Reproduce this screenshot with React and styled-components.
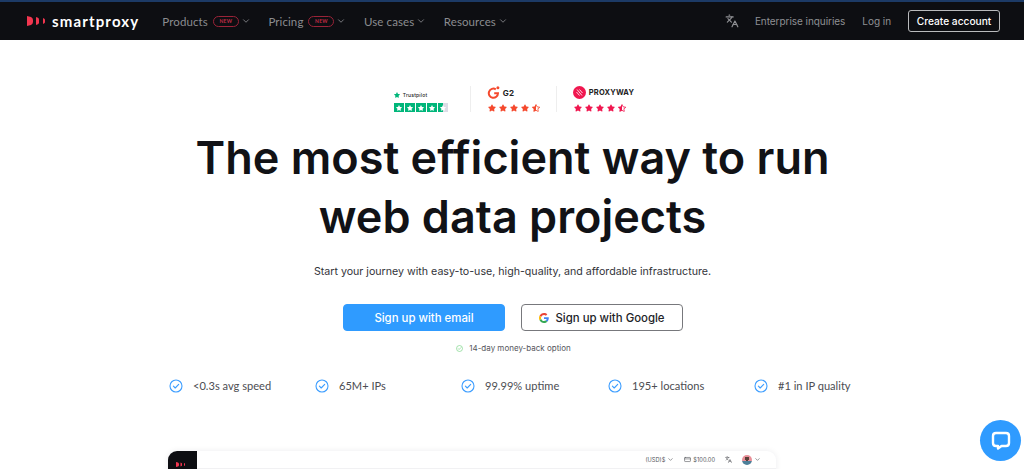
import React from "react";
import styled, { createGlobalStyle } from "styled-components";
import { FaStar, FaStarHalfAlt } from "react-icons/fa";
import { LuChevronDown, LuLanguages, LuCreditCard } from "react-icons/lu";

const GlobalStyle = createGlobalStyle`
  html, body { margin: 0; padding: 0; background: #fff; }
  body { font-family: "Inter", "Liberation Sans", sans-serif; overflow: hidden; }
  * { box-sizing: border-box; }
`;

const Page = styled.div`
  position: relative;
  width: 1024px;
  height: 469px;
  overflow: hidden;
  background: #fff;
`;

const Nav = styled.header`
  height: 40px;
  background: #0d0e12;
  border-top: 2px solid #1c3a66;
  display: flex;
  align-items: center;
  justify-content: space-between;
  padding: 0 24px 0 27px;
`;

const NavLeft = styled.div`
  display: flex;
  align-items: center;
`;

const Brand = styled.div`
  display: flex;
  align-items: center;
  gap: 7px;
  margin-right: 23px;
`;

const BrandName = styled.span`
  font-family: "Lato", sans-serif;
  font-size: 15px;
  font-weight: 700;
  letter-spacing: 1.15px;
  color: #fff;
`;

const NavItem = styled.div`
  display: flex;
  align-items: center;
  font-family: "Lato", sans-serif;
  font-size: 11.5px;
  color: #8b8c90;
  margin-right: 17.5px;
  letter-spacing: 0.1px;
  svg { margin-left: 2px; }
`;

const NewBadge = styled.span`
  width: 26px;
  height: 11px;
  margin-left: 5px;
  border: 1px solid #9a2338;
  border-radius: 6px;
  color: #c22c46;
  font-size: 5px;
  font-weight: 700;
  letter-spacing: 0.3px;
  display: flex;
  align-items: center;
  justify-content: center;
`;

const NavRight = styled.div`
  display: flex;
  align-items: center;
  color: #8f9094;
  font-size: 10px;
  letter-spacing: -0.05px;
  svg { margin-right: 16px; }
`;

const NavLink = styled.span`
  margin-right: 17px;
`;

const OutlineButton = styled.button`
  width: 92px;
  height: 22px;
  padding: 0;
  background: transparent;
  border: 1px solid #b9babc;
  border-radius: 3px;
  color: #fff;
  font: 500 10.2px "Inter", sans-serif;
`;

const Hero = styled.main`
  display: flex;
  flex-direction: column;
  align-items: center;
`;

const Ratings = styled.div`
  display: flex;
  align-items: stretch;
  margin: 46px 0 0 -2px;
  height: 26px;
`;

const Rating = styled.div`
  display: flex;
  flex-direction: column;
  justify-content: ${(p) => (p.$compact ? "flex-end" : "space-between")};
  gap: ${(p) => (p.$compact ? "5px" : "0")};
  align-items: flex-start;
  padding: 0 ${(p) => p.$pad}px;
  border-left: ${(p) => (p.$divider ? "1px solid #eeeeee" : "none")};
`;

const RatingName = styled.div`
  display: flex;
  align-items: center;
  gap: 3px;
  font-size: ${(p) => p.$size}px;
  font-weight: ${(p) => p.$weight};
  color: #222;
  letter-spacing: 0.2px;
`;

const Stars = styled.div`
  display: flex;
  gap: 3px;
  margin-left: 1px;
  color: ${(p) => p.$color};
  font-size: 8px;
`;

const TrustBar = styled.div`
  display: flex;
  gap: 1px;
  height: 9px;
`;

const TrustCell = styled.span`
  width: 10px;
  display: flex;
  align-items: center;
  justify-content: center;
  color: #fff;
  font-size: 6px;
  background: ${(p) => (p.$half ? "linear-gradient(90deg, #00b67a 50%, #dcdce6 50%)" : "#00b67a")};
`;

const Title = styled.h1`
  margin: 16px 0 0 1px;
  text-align: center;
  font-size: 45px;
  line-height: 59px;
  font-weight: 600;
  color: #111216;
`;

const Subtitle = styled.p`
  margin: 18px 0 0 1px;
  font-size: 10.65px;
  line-height: 16px;
  color: #33343a;
`;

const Actions = styled.div`
  display: flex;
  gap: 16px;
  margin: 24px 0 0 2px;
`;

const CtaButton = styled.button`
  width: 162px;
  height: 27px;
  padding: 0;
  border-radius: 4px;
  display: flex;
  align-items: center;
  justify-content: center;
  gap: 6px;
  font: 500 11.4px "Inter", sans-serif;
  border: 1px solid ${(p) => (p.$primary ? "#2f9bff" : "#77787c")};
  background: ${(p) => (p.$primary ? "#2f9bff" : "#fff")};
  color: ${(p) => (p.$primary ? "#fff" : "#222328")};
`;

const Guarantee = styled.div`
  display: flex;
  align-items: center;
  gap: 6px;
  margin: 10px 0 0 3px;
  font-size: 8px;
  line-height: 14px;
  color: #55565c;
`;

const Features = styled.ul`
  list-style: none;
  width: 100%;
  margin: 23px 0 0;
  padding: 0 0 0 169px;
  display: flex;
`;

const Feature = styled.li`
  width: ${(p) => p.$w}px;
  display: flex;
  align-items: center;
  gap: 10px;
  font-family: "Lato", sans-serif;
  font-size: 11.1px;
  line-height: 16px;
  color: #4c4d52;
`;

const Preview = styled.section`
  width: 608px;
  height: 40px;
  margin: 57px 0 0 -80px;
  display: flex;
  flex: none;
  border-radius: 9px 9px 0 0;
  box-shadow: 0 0 6px rgba(20, 30, 50, 0.08);
  background: #fff;
`;

const PreviewSide = styled.div`
  width: 29px;
  background: #0d0e12;
  border-radius: 9px 0 0 0;
  padding: 11px 0 0 8px;
`;

const PreviewBar = styled.div`
  flex: 1;
  height: 18px;
  display: flex;
  justify-content: flex-end;
  align-items: center;
  gap: 10px;
  padding-right: 15px;
  font-size: 5.7px;
  color: #55565c;
  border-bottom: 1px solid #f1f1f3;
`;

const PreviewGroup = styled.span`
  display: flex;
  align-items: center;
  gap: 2px;
`;

const Avatar = styled.span`
  width: 10px;
  height: 10px;
  border-radius: 50%;
  background:
    radial-gradient(circle at 50% 38%, #5a4038 0 2px, transparent 2.2px),
    linear-gradient(180deg, #e88f98 0 60%, #4d7f99 60%);
`;

const ChatButton = styled.button`
  position: absolute;
  right: 3px;
  top: 420px;
  width: 41px;
  height: 41px;
  padding: 0;
  border: none;
  border-radius: 50%;
  background: #2f9bff;
  display: flex;
  align-items: center;
  justify-content: center;
`;

const Logo = ({ h = 10 }) => (
  <svg width={h * 1.8} height={h} viewBox="0 0 18 10" style={{ display: "block" }}>
    <path d="M0 0L4 1Q6 2 6 4V6Q6 8 4 9L0 10Z" fill="#f2364f" />
    <path d="M9 1L11 1.800Q12 2.400 12 3.500V6.500Q12 7.600 11 8.200L9 9Z" fill="#f2364f" />
    <path d="M16 2L17.300 2.700Q18 3.200 18 4V6Q18 6.800 17.300 7.300L16 8Z" fill="#f2364f" />
  </svg>
);

const Check = ({ size, color }) => (
  <svg width={size} height={size} viewBox="0 0 14 14" fill="none" stroke={color} style={{ flex: "none" }}>
    <circle cx="7" cy="7" r="6" strokeWidth="1.1" />
    <path d="M4.400 7.200L6.200 9L9.700 5.300" strokeWidth="1.100" strokeLinecap="round" strokeLinejoin="round" />
  </svg>
);

const GoogleMark = () => (
  <svg width="10" height="10" viewBox="0 0 48 48">
    <path fill="#EA4335" d="M24 9.500c3.500 0 6.700 1.200 9.200 3.600l6.900-6.900C35.900 2.400 30.400 0 24 0 14.600 0 6.500 5.400 2.600 13.200l8 6.200C12.500 13.700 17.800 9.500 24 9.500z" />
    <path fill="#4285F4" d="M47 24.500c0-1.600-.1-3.100-.4-4.500H24v9h12.900c-.6 3-2.200 5.500-4.800 7.200l7.700 6c4.500-4.200 7.200-10.300 7.200-17.700z" />
    <path fill="#FBBC05" d="M10.600 28.600c-.5-1.400-.8-3-.8-4.600s.3-3.200.8-4.600l-8-6.200C.9 16.500 0 20.100 0 24s.9 7.500 2.600 10.800l8-6.200z" />
    <path fill="#34A853" d="M24 48c6.500 0 11.900-2.100 15.900-5.800l-7.700-6c-2.200 1.500-4.900 2.300-8.200 2.300-6.200 0-11.500-4.200-13.400-9.900l-8 6.200C6.500 42.600 14.600 48 24 48z" />
  </svg>
);

const G2Mark = () => (
  <svg width="13" height="13" viewBox="0 0 13 13" fill="none">
    <path d="M8.800 3.300A4.600 4.600 0 1 0 11 7.300H7.200" stroke="#f5492d" strokeWidth="2" />
    <circle cx="10.900" cy="1.800" r="1.500" fill="#f5492d" />
  </svg>
);

const ProxywayMark = () => (
  <svg width="13" height="13" viewBox="0 0 13 13">
    <circle cx="6.500" cy="6.500" r="6.500" fill="#f0174f" />
    <path d="M4 3.500L9 9.500M6.500 3.500L9.500 7M3.500 6L6.500 9.500" stroke="#fff" strokeWidth="1" opacity="0.8" />
  </svg>
);

const ChatIcon = () => (
  <svg width="22" height="22" viewBox="0 0 22 22" fill="none">
    <path
      d="M6 3H16C18 3 19 4 19 6V13C19 15 18 16 16 16H11.500L8 18.500V16H6C4 16 3 15 3 13V6C3 4 4 3 6 3Z"
      stroke="#fff"
      strokeWidth="2.400"
      strokeLinejoin="round"
    />
  </svg>
);

const FourHalf = ({ color }) => (
  <Stars $color={color}>
    <FaStar />
    <FaStar />
    <FaStar />
    <FaStar />
    <FaStarHalfAlt />
  </Stars>
);

const features = [
  { text: "<0.3s avg speed", w: 146 },
  { text: "65M+ IPs", w: 146 },
  { text: "99.99% uptime", w: 147 },
  { text: "195+ locations", w: 146 },
  { text: "#1 in IP quality", w: 120 },
];

export default function App() {
  return (
    <Page>
      <GlobalStyle />
      <Nav>
        <NavLeft>
          <Brand>
            <Logo />
            <BrandName>smartproxy</BrandName>
          </Brand>
          <NavItem>
            Products
            <NewBadge>NEW</NewBadge>
            <LuChevronDown size={10} />
          </NavItem>
          <NavItem>
            Pricing
            <NewBadge>NEW</NewBadge>
            <LuChevronDown size={10} />
          </NavItem>
          <NavItem>
            Use cases
            <LuChevronDown size={10} />
          </NavItem>
          <NavItem>
            Resources
            <LuChevronDown size={10} />
          </NavItem>
        </NavLeft>
        <NavRight>
          <LuLanguages size={14} />
          <NavLink>Enterprise inquiries</NavLink>
          <NavLink>Log in</NavLink>
          <OutlineButton>Create account</OutlineButton>
        </NavRight>
      </Nav>
      <Hero>
        <Ratings>
          <Rating $pad={22} $compact>
            <RatingName $size={5} $weight={500}>
              <FaStar color="#00b67a" size={6} />
              Trustpilot
            </RatingName>
            <TrustBar>
              <TrustCell><FaStar /></TrustCell>
              <TrustCell><FaStar /></TrustCell>
              <TrustCell><FaStar /></TrustCell>
              <TrustCell><FaStar /></TrustCell>
              <TrustCell $half><FaStar /></TrustCell>
            </TrustBar>
          </Rating>
          <Rating $pad={16} $divider>
            <RatingName $size={8} $weight={700}>
              <G2Mark />
              G2
            </RatingName>
            <FourHalf color="#f5492d" />
          </Rating>
          <Rating $pad={16} $divider>
            <RatingName $size={7.5} $weight={700}>
              <ProxywayMark />
              PROXYWAY
            </RatingName>
            <FourHalf color="#f0174f" />
          </Rating>
        </Ratings>
        <Title>
          The most efficient way to run
          <br />
          web data projects
        </Title>
        <Subtitle>Start your journey with easy-to-use, high-quality, and affordable infrastructure.</Subtitle>
        <Actions>
          <CtaButton $primary>Sign up with email</CtaButton>
          <CtaButton>
            <GoogleMark />
            Sign up with Google
          </CtaButton>
        </Actions>
        <Guarantee>
          <Check size={7} color="#5cc96b" />
          14-day money-back option
        </Guarantee>
        <Features>
          {features.map((f) => (
            <Feature key={f.text} $w={f.w}>
              <Check size={14} color="#3c9dff" />
              {f.text}
            </Feature>
          ))}
        </Features>
        <Preview>
          <PreviewSide>
            <Logo h={5} />
          </PreviewSide>
          <PreviewBar>
            <PreviewGroup>
              (USD)$
              <LuChevronDown size={7} />
            </PreviewGroup>
            <PreviewGroup>
              <LuCreditCard size={7} />
              $100.00
            </PreviewGroup>
            <LuLanguages size={7} />
            <PreviewGroup>
              <Avatar />
              <LuChevronDown size={7} />
            </PreviewGroup>
          </PreviewBar>
        </Preview>
      </Hero>
      <ChatButton aria-label="Chat">
        <ChatIcon />
      </ChatButton>
    </Page>
  );
}
